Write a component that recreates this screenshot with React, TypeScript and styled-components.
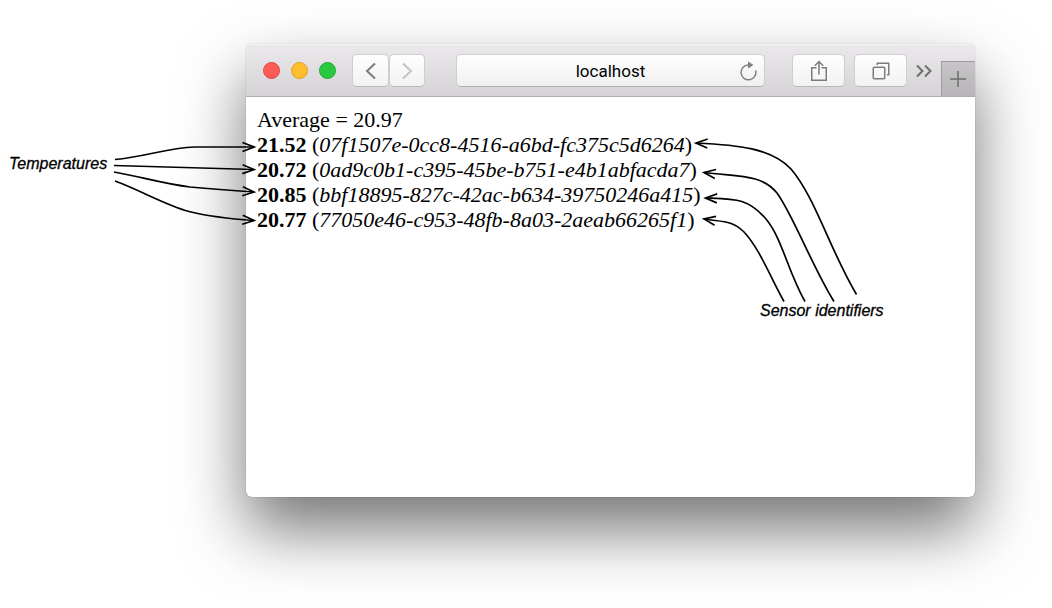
import React from "react";
import styled, { createGlobalStyle } from "styled-components";

const GlobalStyle = createGlobalStyle`
  *, *::before, *::after { box-sizing: border-box; }
  body { margin: 0; background: #fff; color: #000; overflow-x: hidden; }
`;

const Figure = styled.figure`
  position: relative;
  display: flex;
  align-items: flex-start;
  margin: 0;
  padding: 44px 77px 111px 0;
  overflow: hidden;
`;

const Label = styled.span`
  font: italic 16px/20px "Liberation Sans", Arial, sans-serif;
  -webkit-text-stroke: 0.3px #000;
  white-space: nowrap;
`;

const SideNote = styled.div`
  flex: 0 0 246px;
  padding: 110px 0 0 9px;
`;

const FloatingLabel = styled(Label)`
  position: absolute;
  left: 760px;
  top: 301px;
`;

const Annotations = styled.svg`
  position: absolute;
  inset: 0;
  width: 100%;
  height: 100%;
  overflow: visible;
  pointer-events: none;
  fill: none;
  stroke: #000;
  stroke-width: 1.7;
`;

const Window = styled.section`
  flex: 1;
  min-width: 0;
  border-radius: 6px;
  background: #fff;
  box-shadow: 0 0 1px rgba(0, 0, 0, 0.5), 0 33px 65px rgba(0, 0, 0, 0.54);
`;

const Toolbar = styled.header`
  display: flex;
  height: 53px;
  padding: 10px 0 0 17px;
  border-radius: 6px 6px 0 0;
  border-bottom: 1px solid #b0aeb0;
  background: linear-gradient(#ebe9eb, #d5d3d5);
  box-shadow: inset 0 1px #f5f4f5;
`;

const Lights = styled.div`
  display: flex;
  gap: 11px;
  padding-top: 8px;
`;

const Light = styled.button<{ $fill: string; $edge: string }>`
  width: 17px;
  height: 17px;
  padding: 0;
  border: 1px solid ${(p) => p.$edge};
  border-radius: 50%;
  background: ${(p) => p.$fill};
`;

const Group = styled.div<{ $gap?: number }>`
  display: flex;
  gap: ${(p) => p.$gap ?? 0}px;
`;

const Navigation = styled(Group)`
  margin-left: 16px;
`;

const ToolButton = styled.button<{ $width: number }>`
  display: flex;
  align-items: center;
  justify-content: center;
  width: ${(p) => p.$width}px;
  height: 33px;
  padding: 0;
  border: 1px solid #cfcdcf;
  border-bottom-color: #b9b7b9;
  border-radius: 5px;
  background: linear-gradient(#fefefe, #f3f2f3);
`;

const Address = styled.div`
  position: relative;
  flex: 1;
  min-width: 0;
  margin: 0 27px 0 31px;
`;

const AddressInput = styled.input`
  display: block;
  width: 100%;
  height: 33px;
  padding: 1px 32px 0;
  border: 1px solid #cfcdcf;
  border-bottom-color: #b0aeb0;
  border-radius: 5px;
  background: linear-gradient(#fefefe, #f1f0f1);
  color: #000;
  font: 17px/20px Roboto, sans-serif;
  text-align: center;
`;

const PlainButton = styled.button`
  display: flex;
  align-items: center;
  justify-content: center;
  width: 34px;
  height: 33px;
  padding: 0;
  border: 0;
  background: none;
`;

const ReloadButton = styled(PlainButton)`
  position: absolute;
  right: 0;
  top: 0;
`;

const NewTabButton = styled(PlainButton)`
  height: 35px;
  margin-top: 7px;
  padding-right: 2px;
  border: solid #9f9d9f;
  border-width: 1px 0 0 1px;
  background: linear-gradient(#c6c4c6, #b7b5b7);
`;

const Icon = styled.svg`
  display: block;
  fill: none;
  stroke: #6e6e6e;
  stroke-width: 1.5;
`;

const Page = styled.main`
  min-height: 400px;
  padding: 10px 11px 24px;
  font: 22px/25px "Liberation Serif", "Times New Roman", serif;
`;

const Average = styled.p`
  margin: 0;
`;

const Readings = styled.ul`
  margin: 0;
  padding: 0;
  list-style: none;
`;

const readings = [
  ["21.52", "07f1507e-0cc8-4516-a6bd-fc375c5d6264"],
  ["20.72", "0ad9c0b1-c395-45be-b751-e4b1abfacda7"],
  ["20.85", "bbf18895-827c-42ac-b634-39750246a415"],
  ["20.77", "77050e46-c953-48fb-8a03-2aeab66265f1"],
];

const arrows = [
  "M115 159.5C145 157 166 148 195 147H254",
  "M114 165.5L254 169.5",
  "M114 172C142 177 164 184 190 187C212 189 232 190.5 254 192",
  "M115 181C140 190 165 205 189 211.5C211 217 232 219 254 220.5",
  "M856.5 294.5C830 250 815 197 791 169C771 148 738 145 696 143",
  "M834 301.5C812 266 793 215 777 193C761 174 740 177 704 172.5",
  "M805 301.5C788 272 782 238 766 219C748 198 735 199 705.5 198",
  "M784 301.5C769 274 759 248 744 232C732 220 722 222 704 219",
];

export default function App() {
  return (
    <>
      <GlobalStyle />
      <Figure>
        <SideNote>
          <Label>Temperatures</Label>
        </SideNote>
        <Window>
          <Toolbar>
            <Lights>
              <Light $fill="#fc5b57" $edge="#e2463f" aria-label="Close" />
              <Light $fill="#fdbd2f" $edge="#e0a028" aria-label="Minimize" />
              <Light $fill="#28c940" $edge="#1faa31" aria-label="Zoom" />
            </Lights>
            <Navigation>
              <ToolButton $width={37} aria-label="Back">
                <Icon width="12" height="18">
                  <path d="M10 1.5L2 9L10 16.5" stroke="#7c7c7c" strokeWidth="2" />
                </Icon>
              </ToolButton>
              <ToolButton $width={36} aria-label="Forward">
                <Icon width="12" height="18">
                  <path d="M2 1.5L10 9L2 16.5" stroke="#c4c4c4" strokeWidth="2" />
                </Icon>
              </ToolButton>
            </Navigation>
            <Address>
              <AddressInput aria-label="Address" defaultValue="localhost" />
              <ReloadButton aria-label="Reload">
                <Icon width="18" height="20">
                  <path d="M16.6 9.5A7.4 7.4 0 1 1 9.2 4" stroke="#808080" />
                  <path d="M9 0.5L14.5 4L9 7.5Z" fill="#808080" stroke="none" />
                </Icon>
              </ReloadButton>
            </Address>
            <Group $gap={9}>
              <ToolButton $width={53} aria-label="Share">
                <Icon width="18" height="24">
                  <path
                    d="M6.5 8.75H1.75V21.25H16.25V8.75H11.5M9 15.5V3M4.8 6.7L9 2.5L13.2 6.7"
                    stroke="#7c7c7c"
                  />
                </Icon>
              </ToolButton>
              <ToolButton $width={53} aria-label="Show all tabs">
                <Icon width="18" height="18">
                  <rect x="1.25" y="5.25" width="11.5" height="11.5" rx="1" stroke="#7c7c7c" />
                  <path d="M5.25 3V1.25H16.75V12.75H15" stroke="#7c7c7c" />
                </Icon>
              </ToolButton>
            </Group>
            <PlainButton aria-label="More tools">
              <Icon width="18" height="14">
                <path d="M2 1.5L7.5 7L2 12.5M10 1.5L15.5 7L10 12.5" strokeWidth="2" />
              </Icon>
            </PlainButton>
            <NewTabButton aria-label="New tab">
              <Icon width="16" height="16">
                <path d="M8 0V16M0 8H16" />
              </Icon>
            </NewTabButton>
          </Toolbar>
          <Page>
            <Average>Average = 20.97</Average>
            <Readings>
              {readings.map(([value, id]) => (
                <li key={id}>
                  <b>{value}</b> (<i>{id}</i>)
                </li>
              ))}
            </Readings>
          </Page>
        </Window>
        <FloatingLabel>Sensor identifiers</FloatingLabel>
        <Annotations aria-hidden="true">
          <defs>
            <marker
              id="head"
              markerUnits="userSpaceOnUse"
              markerWidth="16"
              markerHeight="12"
              refX="12"
              refY="6"
              orient="auto"
            >
              <path d="M0.5 1.5L12 6L0.5 10.5" fill="none" stroke="#000" strokeWidth="1.7" />
            </marker>
          </defs>
          {arrows.map((d) => (
            <path key={d} d={d} markerEnd="url(#head)" />
          ))}
        </Annotations>
      </Figure>
    </>
  );
}
